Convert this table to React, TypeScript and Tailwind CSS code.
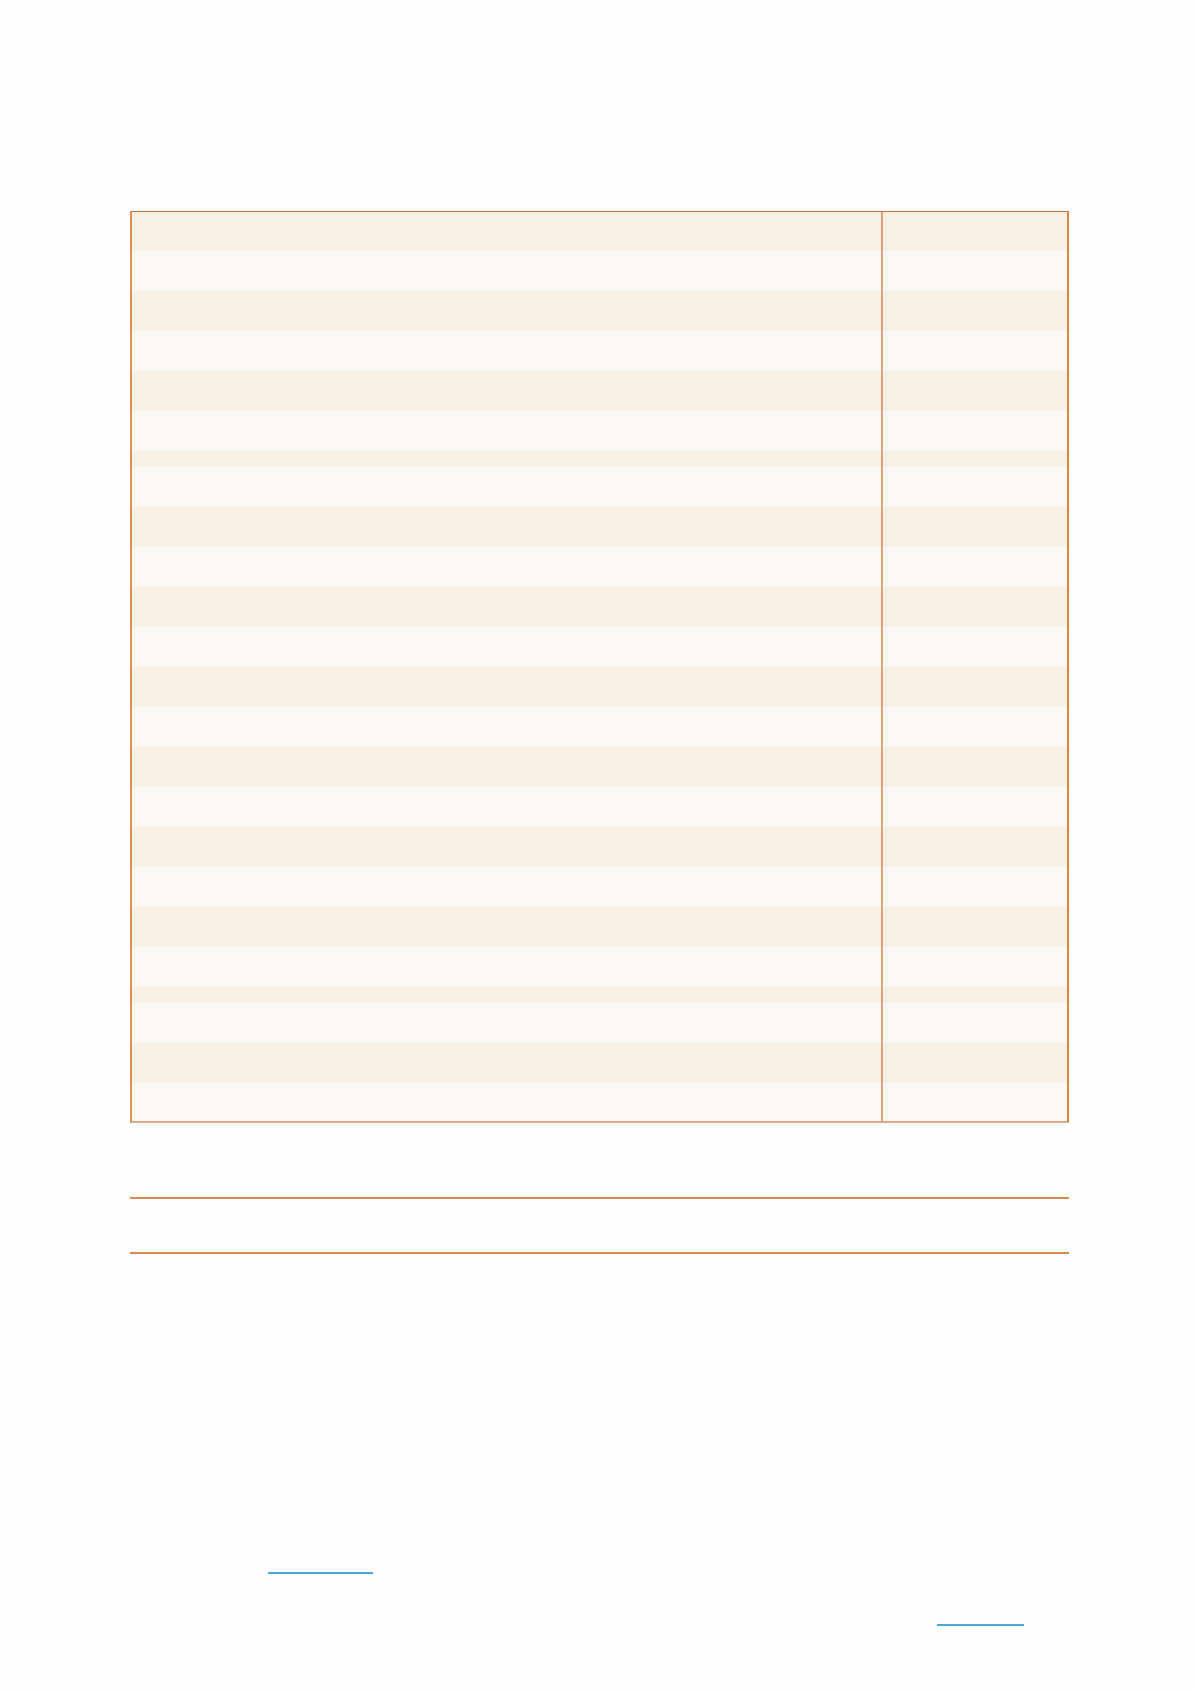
import React from "react";

const heights = [39, 40, 40, 40, 40, 40, 16, 40, 40, 40, 40, 40, 40, 40, 40, 40, 40, 40, 40, 40, 16, 40, 40, 38];
const rows = heights.map((h, i) => ({ h, dark: i % 2 === 0 }));

export default function App() {
  return (
    <div className="w-[1196px] h-[1692px] bg-[#fefefe] font-['Liberation_Sans',sans-serif]">
      <div className="pt-[211px] pl-[130px]">
        <div className="w-[939px] border-t border-t-[#c0713a] border-l-2 border-l-[#dd9058] border-r-2 border-r-[#d98548] border-b-2 border-b-[#dcaa85]">
          {rows.map((row, i) => (
            <div
              key={i}
              className={`flex ${row.dark ? "bg-[#f9f0e4]" : "bg-[#fcf8f3]"}`}
              style={{ height: row.h }}
            >
              <div className="w-[751px] border-r-2 border-r-[#dba27a]" />
              <div className="flex-1" />
            </div>
          ))}
        </div>
        <div className="mt-[74px] w-[939px] h-[57px] border-t-2 border-t-[#d98a52] border-b-2 border-b-[#d98a52]" />
        <div className="mt-[318px] ml-[138px] w-[105px] h-[2px] bg-[#4ea5dc]" />
        <div className="mt-[50px] ml-[807px] w-[87px] h-[2px] bg-[#4ea5dc]" />
      </div>
    </div>
  );
}
